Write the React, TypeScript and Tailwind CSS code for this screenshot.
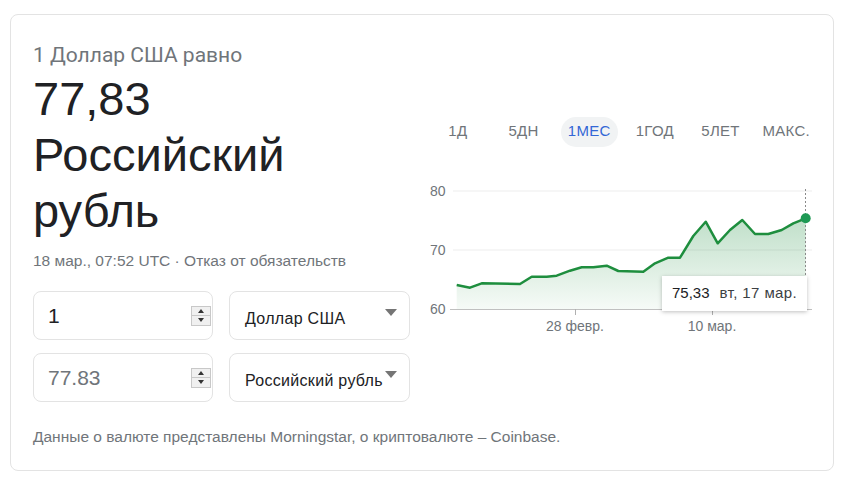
import React from "react"

const pts: [number, number][] = [
  [456.7, 285], [470, 287.7], [481.7, 283.3], [520, 284], [531.7, 276.7], [546.7, 276.7],
  [556.7, 275.7], [570, 270.7], [581.7, 267.3], [593.3, 267.3], [606.7, 265.7], [618.3, 271],
  [643.3, 271.7], [655, 263.3], [668.3, 257.7], [680, 257.7], [693.3, 236], [705.7, 221.7],
  [717.7, 243.3], [730, 230], [742.3, 220], [755, 234], [768.3, 234], [781.7, 230],
  [793.3, 223.3], [805.7, 218.3],
]

const tabs = ["1Д", "5ДН", "1МЕС", "1ГОД", "5ЛЕТ", "МАКС."]

function Spinner() {
  return (
    <div className="flex h-[20px] w-[20px] flex-col border border-[#c8c8c8] bg-[#f0f0f0]">
      <div className="flex flex-1 items-center justify-center border-b border-[#c8c8c8]">
        <div className="h-0 w-0 border-x-[3px] border-b-[4px] border-x-transparent border-b-[#333]" />
      </div>
      <div className="flex flex-1 items-center justify-center">
        <div className="h-0 w-0 border-x-[3px] border-t-[4px] border-x-transparent border-t-[#333]" />
      </div>
    </div>
  )
}

function Caret() {
  return <div className="h-0 w-0 border-x-[6px] border-t-[7px] border-x-transparent border-t-[#757575]" />
}

function Chart() {
  const line = pts.map((p, i) => `${i ? "L" : "M"}${p[0]} ${p[1]}`).join(" ")
  const area = `${line} L805.7 309 L456.7 309 Z`
  return (
    <div className="relative ml-[10px] mt-[26px] h-[170px] w-[400px]">
      <svg width="400" height="170" viewBox="420 172 400 170" className="block">
        <defs>
          <linearGradient id="fill" x1="0" y1="0" x2="0" y2="1">
            <stop offset="0" stopColor="#1e8e3e" stopOpacity="0.28" />
            <stop offset="1" stopColor="#1e8e3e" stopOpacity="0.04" />
          </linearGradient>
        </defs>
        <line x1="453" y1="191" x2="812" y2="191" stroke="#ededed" />
        <line x1="453" y1="250" x2="812" y2="250" stroke="#ededed" />
        <path d={area} fill="url(#fill)" />
        <line x1="450" y1="309.5" x2="812" y2="309.5" stroke="#c0c0c0" />
        <line x1="575.5" y1="309" x2="575.5" y2="315" stroke="#b0b0b0" />
        <line x1="712.5" y1="309" x2="712.5" y2="315" stroke="#b0b0b0" />
        <line x1="805.5" y1="189" x2="805.5" y2="309" stroke="#8a8a8a" strokeDasharray="2 2" />
        <path d={line} fill="none" stroke="#1e8e3e" strokeWidth="2.5" strokeLinejoin="round" />
        <circle cx="805.7" cy="218.3" r="5" fill="#1e9954" />
        <g fill="#70757a" fontFamily="'Liberation Sans', Arial, sans-serif" fontSize="14">
          <text x="430" y="196">80</text>
          <text x="430" y="255">70</text>
          <text x="430" y="314">60</text>
          <text x="575" y="331" textAnchor="middle">28 февр.</text>
          <text x="712" y="331" textAnchor="middle">10 мар.</text>
        </g>
      </svg>
      <div className="absolute left-[242px] top-[104px] flex h-[35px] w-[145px] items-center gap-[10px] bg-white pl-[10px] text-[15px] shadow-[0_1px_4px_rgba(0,0,0,0.25)]">
        <span className="text-[#202124]">75,33</span>
        <span className="tracking-[0.4px] text-[#3c4043]">вт, 17 мар.</span>
      </div>
    </div>
  )
}

export default function App() {
  return (
    <div className="min-h-screen bg-white pl-[10px] pt-[14px] font-[family-name:'Liberation_Sans',Arial,sans-serif]">
      <div className="flex h-[457px] w-[824px] rounded-lg border border-[#e3e3e3]">
        <div className="flex w-[399px] flex-col pl-[22px] pt-[28px]">
          <div className="font-[family-name:Roboto,sans-serif] text-[21px] leading-[25px] text-[#70757a]">
            1 Доллар США равно
          </div>
          <div className="mt-[3px] text-[47px] leading-[56px] text-[#202124]">
            <div>77,83</div>
            <div>Российский</div>
            <div>рубль</div>
          </div>
          <div className="mt-[12px] text-[15.5px] leading-[20px] text-[#70757a]">
            18 мар., 07:52 UTC · Отказ от обязательств
          </div>
          <div className="mt-[20px] flex flex-col gap-[13px]">
            {[
              { v: "1", c: "text-[#202124]", cur: "Доллар США" },
              { v: "77.83", c: "text-[#70757a]", cur: "Российский рубль" },
            ].map((r) => (
              <div key={r.v} className="flex gap-[16px]">
                <div className="flex h-[49px] w-[180px] items-center justify-between rounded-lg border border-[#e3e3e3] pl-[14px] pr-[1px]">
                  <span className={`text-[21px] ${r.c}`}>{r.v}</span>
                  <Spinner />
                </div>
                <div className="relative flex h-[49px] w-[181px] items-center rounded-lg border border-[#e3e3e3] pl-[15px]">
                  <span className="mt-[6px] whitespace-nowrap text-[16px] tracking-[0.3px] text-[#202124]">{r.cur}</span>
                  <div className="absolute right-[12px] top-[17px]">
                    <Caret />
                  </div>
                </div>
              </div>
            ))}
          </div>
          <div className="mt-[25px] whitespace-nowrap text-[15.5px] leading-[20px] text-[#70757a]">
            Данные о валюте представлены Morningstar, о криптовалюте – Coinbase.
          </div>
        </div>
        <div className="flex flex-col pt-[102px]">
          <div className="ml-[15px] flex h-[29px] w-[394px]">
            {tabs.map((t) => (
              <div key={t} className="flex flex-1 items-center justify-center">
                {t === "1МЕС" ? (
                  <span className="flex h-[30px] items-center rounded-full bg-[#f1f3f4] px-[7px] text-[15px] tracking-[0.3px] text-[#3367d6]">
                    {t}
                  </span>
                ) : (
                  <span className="text-[15px] tracking-[0.3px] text-[#70757a]">{t}</span>
                )}
              </div>
            ))}
          </div>
          <Chart />
        </div>
      </div>
    </div>
  )
}
